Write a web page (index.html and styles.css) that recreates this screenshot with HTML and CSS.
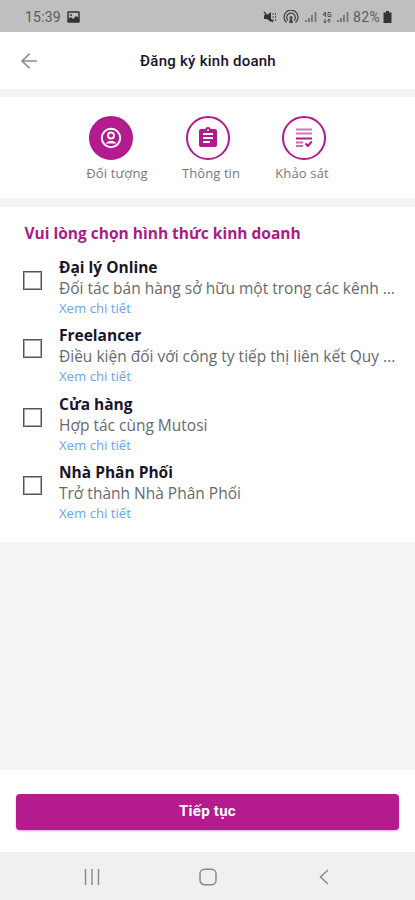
FILE: index.html
```html
<!DOCTYPE html>
<html lang="vi">
<head>
<meta charset="utf-8">
<title>Đăng ký kinh doanh</title>
<link rel="stylesheet" href="styles.css">
</head>
<body>
<div class="screen">
  <div class="status">
    <span class="clock">15:39</span>
    <svg class="photo" width="13" height="12" viewBox="0 0 13 12"><rect x="1" y="1" width="11" height="10" rx=".5" fill="none" stroke="#333" stroke-width="1.500"/><path d="M1 10V8l3-2 2 2 3-3 3 2v4H1z" fill="#333"/><circle cx="4" cy="4" r="1" fill="#333"/></svg>
    <div class="indicators">
      <svg width="14" height="14" viewBox="0 0 14 14"><path d="M1 5h3l4-3v10L4 9H1z" fill="#333"/><path d="M1 2l9 10" stroke="#333" stroke-width="1.400"/><path d="M10 3v2m0 1v2m0 1v2M12.500 3v2m0 1v2m0 1v2" stroke="#555"/></svg>
      <svg width="16" height="14" viewBox="0 0 16 14"><g fill="none" stroke="#444" stroke-width="1.300"><path d="M3.500 12.500a7 7 0 1 1 9 0"/><path d="M5 10.500a4.300 4.300 0 1 1 6 0"/></g><circle cx="8" cy="7.500" r="1.500" fill="#444"/><path d="M6 13l1-4h2l1 4z" fill="#444"/></svg>
      <svg width="12" height="12" viewBox="0 0 12 12"><path d="M1 11V9m3 2V7" stroke="#666" stroke-width="1.600"/><path d="M7 11V4m3.500 7V1" stroke="#777" stroke-width="1.800"/></svg>
      <svg class="data" width="10" height="13" viewBox="0 0 10 13"><path d="M3 1L1 4h3M3.500 1v5M9 1.500H6v4h3v-2H7.500M3 8v4M1.500 10L3 12l1.500-2M7 12V8M5.500 10L7 8l1.500 2" fill="none" stroke="#555"/></svg>
      <svg width="12" height="12" viewBox="0 0 12 12"><path d="M1 11V9m3 2V7" stroke="#666" stroke-width="1.600"/><path d="M7 11V4m3.500 7V1" stroke="#777" stroke-width="1.800"/></svg>
      <span class="percent">82%</span>
      <svg width="9" height="12" viewBox="0 0 9 12"><path d="M3 0h3v1.500h2.500V12H.5V1.500H3z" fill="#333"/></svg>
    </div>
  </div>

  <header class="header">
    <svg class="back" width="18" height="18" viewBox="0 0 18 18"><path d="M17 9H2M9.500 1.800L2 9l7.500 7.200" fill="none" stroke="#8c8c8c" stroke-width="1.600"/></svg>
    <h1>Đăng ký kinh doanh</h1>
  </header>

  <nav class="steps">
    <div class="step active">
      <div class="disc"><svg width="24" height="24" viewBox="0 0 24 24"><circle cx="12" cy="12" r="9.200" fill="none" stroke="#fff" stroke-width="1.900"/><circle cx="12" cy="9.500" r="3" fill="none" stroke="#fff" stroke-width="1.800"/><path d="M6.500 17.500c1.500-2 3.500-2.500 5.500-2.500s4 .5 5.500 2.500z" fill="#fff"/></svg></div>
      <span class="target">Đối tượng</span>
    </div>
    <div class="step">
      <div class="disc"><svg width="24" height="24" viewBox="0 0 24 24"><path fill="#b01a8d" fill-rule="evenodd" d="M19 3h-4.180C14.400 1.840 13.300 1 12 1s-2.400.84-2.820 2H5c-1.100 0-2 .9-2 2v14c0 1.100.9 2 2 2h14c1.100 0 2-.9 2-2V5c0-1.100-.9-2-2-2zm-7 0a1 1 0 1 1 0 2 1 1 0 0 1 0-2zm2 14H7v-2h7zm3-4H7v-2h10zm0-4H7V7h10z"/></svg></div>
      <span class="info">Thông tin</span>
    </div>
    <div class="step">
      <div class="disc"><svg width="18" height="20" viewBox="0 0 18 20"><g fill="none" stroke="#b01a8d"><path d="M1 1.500h16M1 5.500h16" stroke-width="2" opacity=".6"/><path d="M1 10.500h16" stroke-width="2"/><path d="M1 14.500h7M1 18h7" stroke-width="1.800" opacity=".65"/><path d="M10.500 15.500l2.300 2.500 4-4.500" stroke-width="2"/></g></svg></div>
      <span class="survey">Khảo sát</span>
    </div>
  </nav>

  <main class="choices">
    <h2>Vui lòng chọn hình thức kinh doanh</h2>
    <div class="choice">
      <i class="box"></i>
      <div class="copy"><h3>Đại lý Online</h3><p>Đối tác bán hàng sở hữu một trong các kênh ...</p><a>Xem chi tiết</a></div>
    </div>
    <div class="choice">
      <i class="box"></i>
      <div class="copy"><h3>Freelancer</h3><p>Điều kiện đối với công ty tiếp thị liên kết Quy ...</p><a>Xem chi tiết</a></div>
    </div>
    <div class="choice">
      <i class="box"></i>
      <div class="copy"><h3>Cửa hàng</h3><p>Hợp tác cùng Mutosi</p><a>Xem chi tiết</a></div>
    </div>
    <div class="choice">
      <i class="box"></i>
      <div class="copy"><h3>Nhà Phân Phối</h3><p>Trở thành Nhà Phân Phối</p><a>Xem chi tiết</a></div>
    </div>
  </main>

  <footer class="footer"><div class="button">Tiếp tục</div></footer>

  <div class="system">
    <svg width="16" height="16" viewBox="0 0 16 16"><path d="M1.500 0v16M8 0v16M14.500 0v16" stroke="#8c8c8c" stroke-width="1.500"/></svg>
    <svg width="18" height="18" viewBox="0 0 18 18"><rect x="1" y="1.200" width="16" height="15.500" rx="4.500" fill="none" stroke="#888" stroke-width="1.500"/></svg>
    <svg width="10" height="16" viewBox="0 0 10 16"><path d="M9 1L1.500 8 9 15" fill="none" stroke="#888" stroke-width="1.500"/></svg>
  </div>
</div>
</body>
</html>
```
FILE: styles.css
```css
* { box-sizing: border-box; }
body, h1, h2, h3, p { margin: 0; }
body { background: #f4f4f4; font-family: "Open Sans", "Noto Sans", sans-serif; }
svg { display: block; flex: none; }

.screen { width: 415px; height: 900px; display: flex; flex-direction: column; background: #f4f4f4; overflow: hidden; white-space: nowrap; }

.status { height: 32px; flex: none; background: #bfbfbf; display: flex; align-items: center; padding: 2px 23px 0 25px; font: 14px Roboto, sans-serif; color: #5b5b5b; }
.clock { width: 36px; letter-spacing: 0.2px; }
.photo { margin-left: 6px; }
.indicators { margin-left: auto; display: flex; align-items: center; gap: 6px; }
.data { margin: 0 -1px; }
.percent { margin: 0 -3px 0 -2px; letter-spacing: 0.3px; }

.header { height: 57px; flex: none; background: #fff; display: flex; align-items: center; padding: 0 20px; }
.header h1 { flex: 1; margin-right: 17px; text-align: center; font: 500 15px Roboto, sans-serif; letter-spacing: 0.25px; color: #17152b; }

.steps { height: 101px; flex: none; margin-top: 8px; background: #fff; display: flex; justify-content: center; padding-top: 19px; }
.step { width: 96.500px; display: flex; flex-direction: column; align-items: center; font-size: 13px; line-height: 20px; color: #777; }
.step span { margin-top: 3px; }
.target { padding-left: 12px; letter-spacing: 0.15px; }
.info { padding-left: 7px; letter-spacing: 0.1px; }
.survey { margin-left: -4px; letter-spacing: 0.15px; }
.disc { width: 44px; height: 44px; border: 2px solid #b01a8d; border-radius: 50%; display: grid; place-items: center; }
.active .disc { background: #b31b8f; }

.choices { height: 335px; flex: none; margin-top: 9px; background: #fff; padding: 14px 16px 0 23px; }
.choices h2 { height: 24px; margin: 0 0 11.500px 1.500px; font-size: 15.500px; line-height: 24px; color: #a81b88; }
.choice { height: 68.500px; display: flex; }
.box { width: 19px; height: 19px; margin: 14px 17px 0 0; border: 1.500px solid #555; outline: 0.500px solid #aaa; outline-offset: -2px; flex: none; }
.copy { display: flex; flex-direction: column; }
.copy h3 { font-size: 15.500px; line-height: 21px; color: #17152b; }
.copy p { font-size: 15.500px; line-height: 21px; color: #68686e; }
.copy a { font-size: 13.200px; line-height: 18px; color: #6ba4ee; }

.footer { height: 82px; flex: none; margin-top: auto; background: #fff; padding: 24px 16px 0; }
.button { height: 36px; border-radius: 4px; background: #b31b8f; box-shadow: 0 1px 2px #b31b8f66; color: #fff; font: 700 15px/35px Roboto, sans-serif; letter-spacing: 0.25px; text-align: center; }

.system { height: 48px; flex: none; background: #f0f0f0; display: flex; align-items: center; justify-content: space-between; padding: 2px 86px 0 84px; }
.system svg:nth-child(2) { margin-right: 4px; }
```
